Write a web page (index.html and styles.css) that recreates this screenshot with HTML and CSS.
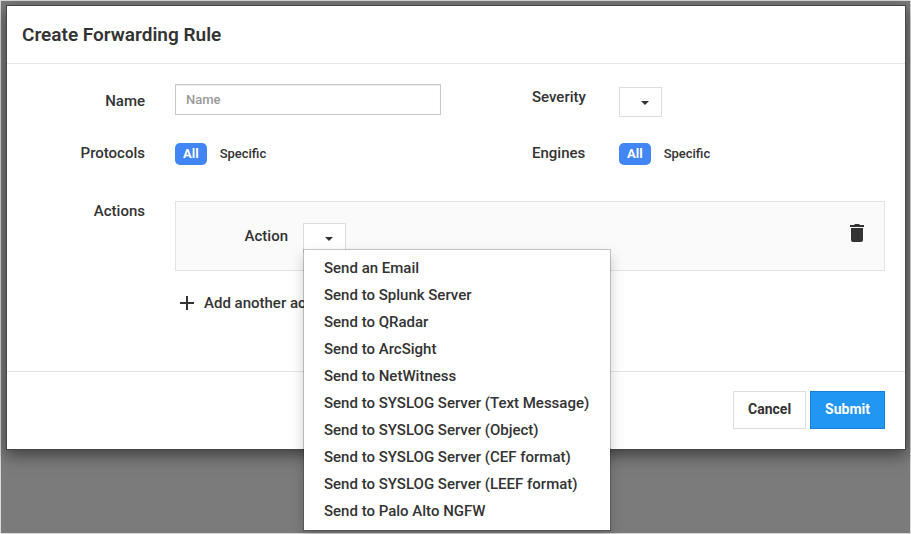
FILE: index.html
```html
<!DOCTYPE html>
<html lang="en">
<head>
<meta charset="utf-8">
<title>Create Forwarding Rule</title>
<link rel="stylesheet" href="styles.css">
</head>
<body>
<div class="backdrop">
  <form class="dialog" role="dialog" aria-labelledby="dialog-title">
    <header class="dialog-header">
      <h1 id="dialog-title">Create Forwarding Rule</h1>
    </header>
    <div class="fields">
      <div class="row">
        <label class="label label-input" for="name">Name</label>
        <input class="text-input" id="name" type="text" placeholder="Name">
        <label class="label label-side" for="severity">Severity</label>
        <span class="dropdown">
          <select class="drop-control" id="severity"><option></option></select>
          <svg class="caret" viewBox="0 0 8 4" aria-hidden="true"><path d="M0 0h8L4 4z"/></svg>
        </span>
      </div>
      <div class="row row-toggles">
        <span class="label" id="protocols">Protocols</span>
        <div class="toggle" role="group" aria-labelledby="protocols">
          <button type="button" class="option selected">All</button>
          <button type="button" class="option">Specific</button>
        </div>
        <span class="label label-side" id="engines">Engines</span>
        <div class="toggle" role="group" aria-labelledby="engines">
          <button type="button" class="option selected">All</button>
          <button type="button" class="option">Specific</button>
        </div>
      </div>
      <div class="row row-actions">
        <span class="label">Actions</span>
        <div class="actions">
          <div class="action-panel">
            <label class="label action-label" for="action">Action</label>
            <div class="dropdown">
              <button type="button" class="drop-control" id="action" aria-haspopup="true" aria-expanded="true"></button>
              <svg class="caret" viewBox="0 0 8 4" aria-hidden="true"><path d="M0 0h8L4 4z"/></svg>
              <ul class="menu">
                <li><button type="button">Send an Email</button></li>
                <li><button type="button">Send to Splunk Server</button></li>
                <li><button type="button">Send to QRadar</button></li>
                <li><button type="button">Send to ArcSight</button></li>
                <li><button type="button">Send to NetWitness</button></li>
                <li><button type="button">Send to SYSLOG Server (Text Message)</button></li>
                <li><button type="button">Send to SYSLOG Server (Object)</button></li>
                <li><button type="button">Send to SYSLOG Server (CEF format)</button></li>
                <li><button type="button">Send to SYSLOG Server (LEEF format)</button></li>
                <li><button type="button">Send to Palo Alto NGFW</button></li>
              </ul>
            </div>
            <button type="button" class="delete" aria-label="Delete action">
              <svg viewBox="0 0 14 18" aria-hidden="true"><path d="M4 1l1-1h4l1 1h4v2H0V1zM1 4h12v12q0 2-2 2H3q-2 0-2-2z"/></svg>
            </button>
          </div>
          <button type="button" class="add">
            <svg viewBox="0 0 14 14" aria-hidden="true"><path d="M6 0h2v6h6v2H8v6H6V8H0V6h6z"/></svg>
            Add another action
          </button>
        </div>
      </div>
    </div>
    <footer class="dialog-footer">
      <button type="button" class="button">Cancel</button>
      <button type="submit" class="button primary">Submit</button>
    </footer>
  </form>
</div>
</body>
</html>
```
FILE: styles.css
```css
* {
  box-sizing: border-box;
}

body {
  margin: 0;
  color: #333;
  font: 500 15px/20px Roboto, sans-serif;
}

button,
input,
select {
  margin: 0;
  padding: 0;
  border: 0;
  border-radius: 0;
  background: none;
  color: inherit;
  font: inherit;
}

svg {
  display: block;
  fill: currentColor;
}

.backdrop {
  min-height: 100vh;
  padding: 4px 4px 20px 5px;
  border: 1px solid #d8dada;
  background: #7b7b7b;
}

.dialog {
  border: 1px solid #444746;
  background: #fff;
  box-shadow: 0 5px 15px rgba(0, 0, 0, 0.5);
}

.dialog-header {
  padding: 17px 15px 16px;
  border-bottom: 1px solid #e5e5e5;
}

h1 {
  margin: 0;
  font-size: 19px;
  font-weight: 600;
  line-height: 24px;
}

.fields {
  padding: 20px 20px 58px 15px;
}

.row {
  display: grid;
  grid-template-columns: 123px 1fr 57px 266px;
  column-gap: 30px;
  align-items: start;
}

.label {
  text-align: right;
}

.label-input {
  padding-top: 7px;
}

.label-side {
  padding-top: 3px;
  text-align: left;
}

.text-input {
  width: 100%;
  max-width: 266px;
  height: 31px;
  padding: 0 10px;
  border: 1px solid #c8c8c8;
  box-shadow: inset 0 1px 1px rgba(0, 0, 0, 0.08);
  font-size: 13px;
}

.text-input::placeholder {
  color: #999;
  opacity: 1;
}

.dropdown {
  position: relative;
  width: 43px;
  margin-top: 3px;
}

.drop-control {
  display: block;
  width: 100%;
  height: 30px;
  border: 1px solid #dcdcdc;
  background: #fff;
  appearance: none;
}

.caret {
  position: absolute;
  top: 14px;
  right: 13px;
  width: 8px;
  height: 4px;
  pointer-events: none;
}

.row-toggles {
  margin-top: 26px;
}

.row-toggles .label {
  padding-top: 0;
}

.toggle {
  display: flex;
  gap: 5px;
}

.option {
  height: 22px;
  padding: 0 8px;
  border-radius: 5px;
  font-size: 13px;
}

.selected {
  background: #4285f4;
  color: #fff;
  font-weight: 700;
}

.row-actions {
  grid-template-columns: 123px 1fr;
  margin-top: 36px;
}

.action-panel {
  display: flex;
  align-items: center;
  height: 70px;
  padding: 0 20px 0 13px;
  border: 1px solid #e3e3e3;
  background: #fafafa;
}

.action-label {
  width: 99px;
  margin-right: 15px;
}

.menu {
  position: absolute;
  z-index: 1;
  top: 26px;
  left: 0;
  width: 308px;
  margin: 0;
  padding: 5px 0;
  border: 1px solid rgba(0, 0, 0, 0.2);
  background: #fff;
  background-clip: padding-box;
  box-shadow: 0 6px 12px rgba(0, 0, 0, 0.18);
  list-style: none;
}

.menu button {
  display: block;
  width: 100%;
  height: 27px;
  padding: 0 20px;
  text-align: left;
  white-space: nowrap;
}

.delete {
  margin-left: auto;
  padding-bottom: 6px;
}

.delete svg {
  width: 14px;
  height: 18px;
}

.add {
  display: flex;
  align-items: center;
  gap: 10px;
  margin: 22px 0 0 5px;
}

.add svg {
  width: 14px;
  height: 14px;
}

.dialog-footer {
  display: flex;
  justify-content: flex-end;
  gap: 4px;
  padding: 19px 20px 20px;
  border-top: 1px solid #e5e5e5;
}

.button {
  height: 38px;
  padding: 0 14px 2px;
  border: 1px solid #dcdcdc;
  background: #fff;
  font-size: 14px;
  font-weight: 700;
}

.primary {
  border-color: #1a7fd6;
  background: #2196f3;
  color: #fff;
}
```
